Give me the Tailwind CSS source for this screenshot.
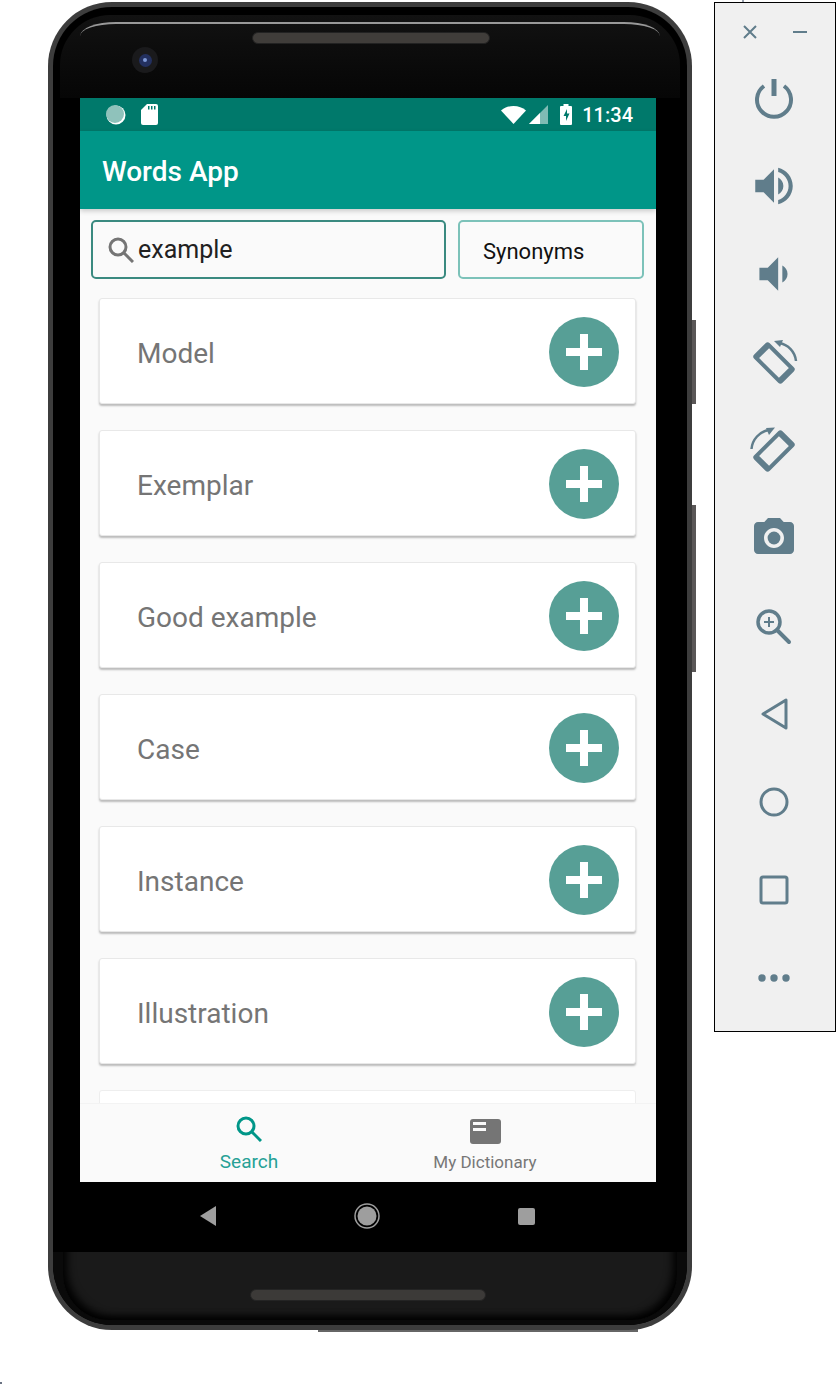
<!DOCTYPE html>
<html lang="en">
<head>
    <meta charset="UTF-8">
    <meta name="viewport" content="width=device-width, initial-scale=1.0">
    <title>Words App</title>
    <script src="https://cdn.jsdelivr.net/npm/@tailwindcss/browser@4"></script>
</head>
<body class="bg-white font-[Roboto,sans-serif]">
    <div class="relative w-[836px] h-[1384px] overflow-hidden flex items-start">
        <!-- Stray marks at the edges of the capture -->
        <div class="absolute left-[742px] top-0 w-[2px] h-[2px] bg-gray-400"></div>
        <div class="absolute left-0 top-[1382px] w-[2px] h-[2px] bg-gray-500"></div>

        <!-- Phone -->
        <div class="relative ml-[48px] mt-[2px] w-[644px] h-[1328px] shrink-0">
            <!-- Side buttons -->
            <div class="absolute left-[644px] top-[318px] w-[4px] h-[84px] bg-[#5a5757]"></div>
            <div class="absolute left-[644px] top-[503px] w-[4px] h-[167px] bg-[#5a5757]"></div>
            <div class="absolute left-[270px] top-[1326px] w-[320px] h-[4px] bg-[#666]"></div>

            <div class="relative h-full rounded-[64px] bg-[#3d3d3d] p-[5px]">
                <div class="relative h-full rounded-[59px] bg-black overflow-hidden flex flex-col">
                    <!-- Top bezel -->
                    <div class="h-[91px] shrink-0 pt-[8px] px-[7px]">
                        <div class="relative h-[83px] rounded-t-[50px] bg-gradient-to-b from-[#121212] to-[#060606] flex justify-center pt-[17px]">
                            <div class="absolute left-[72px] top-[32px] w-[26px] h-[26px] rounded-full bg-[#1a1a1c] flex items-center justify-center">
                                <div class="w-[13px] h-[13px] rounded-full bg-[#23305f] flex items-center justify-center">
                                    <div class="w-[4px] h-[4px] rounded-full bg-[#7f9ad8]"></div>
                                </div>
                            </div>
                            <div class="ml-[2px] w-[238px] h-[12px] rounded-full border border-[#222] bg-[#403d3a]"></div>
                        </div>
                    </div>
                    <!-- Glass highlight -->
                    <div class="absolute left-[27px] top-[15px] w-[580px] h-[14px] rounded-tl-[36px_14px] rounded-tr-[36px_14px] border-t-2 border-[#999]"></div>

                    <!-- Screen -->
                    <div class="ml-[27px] w-[576px] h-[1154px] shrink-0 flex flex-col bg-[#fafafa]">
                        <!-- Status bar -->
                        <div class="h-[33px] shrink-0 bg-[#00796b] flex items-center pl-[26px] pr-[23px]">
                            <svg class="w-[20px] h-[20px]" viewBox="0 0 20 20">
                                <circle cx="10" cy="10" r="9.5" fill="#fff"></circle>
                                <circle cx="9" cy="9" r="9" fill="#8fc2bb"></circle>
                            </svg>
                            <svg class="ml-[15px] w-[17px] h-[21px]" viewBox="0 0 17 21">
                                <path fill="#fff" d="M6 0h9a2 2 0 0 1 2 2v17a2 2 0 0 1-2 2H2a2 2 0 0 1-2-2V6z"></path>
                                <path fill="#00796b" d="M7 2h1.500v3.500H7zM10 2h1.500v3.500H10zM13 2h1.500v3.500H13z"></path>
                            </svg>
                            <svg class="ml-auto w-[25px] h-[18px]" viewBox="0 0 25 18">
                                <path fill="#fff" d="M12.500 18 0 4.500C3.300 1.700 7.700 0 12.500 0S21.700 1.700 25 4.500z"></path>
                            </svg>
                            <svg class="ml-[3px] w-[19px] h-[19px]" viewBox="0 0 19 19">
                                <path fill="#7fbbb4" d="M19 0v19H0z"></path>
                                <path fill="#fff" d="M11 8v11H0z"></path>
                            </svg>
                            <svg class="ml-[12px] w-[12px] h-[21px]" viewBox="0 0 12 21">
                                <path fill="#fff" d="M3.500 0h5v2H11a1 1 0 0 1 1 1v17a1 1 0 0 1-1 1H1a1 1 0 0 1-1-1V3a1 1 0 0 1 1-1h2.500z"></path>
                                <path fill="#00796b" d="M7 5 3.500 12H6v5l3.500-7.500H7z"></path>
                            </svg>
                            <span class="ml-[10px] text-white text-[20px] leading-none font-medium">11:34</span>
                        </div>

                        <!-- App bar -->
                        <div class="relative z-10 h-[78px] shrink-0 bg-[#009688] flex items-center pl-[22px] shadow-[0_2px_5px_rgba(0,0,0,0.2)]">
                            <h1 class="mt-[4px] text-white text-[28px] font-medium">Words App</h1>
                        </div>

                        <!-- Results -->
                        <div class="h-[894px] shrink-0 overflow-hidden pt-[11px]">
                            <div class="flex gap-[12px] pl-[11px]">
                                <div class="w-[355px] h-[59px] rounded-[5px] border-2 border-[#3a8a80] bg-[#fafafa] flex items-center pl-[15px]">
                                    <svg class="w-[26px] h-[26px] shrink-0" fill="none" stroke="#757575" stroke-width="3" viewBox="0 0 26 26">
                                        <circle cx="10" cy="10" r="8"></circle>
                                        <path d="m16 16 9 9"></path>
                                    </svg>
                                    <span class="ml-[4px] text-[25px] text-[#212121]">example</span>
                                </div>
                                <div class="w-[186px] h-[59px] rounded-[5px] border-2 border-[#7cc2b9] bg-[#fafafa] flex items-center pl-[23px]">
                                    <span class="mt-[4px] text-[22px] text-[#111]">Synonyms</span>
                                </div>
                            </div>

                            <div class="mt-[19px] ml-[19px] w-[537px] flex flex-col gap-[26px]">
                                <div class="h-[106px] shrink-0 rounded-[3px] bg-white border border-[#e8e8e8] shadow-[0_2px_2px_rgba(0,0,0,0.25)] flex items-center pl-[37px] pr-[16px]">
                                    <span class="mt-[6px] text-[28px] text-[#757575]">Model</span>
                                    <div class="ml-auto mt-[2px] w-[70px] h-[70px] rounded-full bg-[#579f96] flex items-center justify-center">
                                        <svg class="w-[36px] h-[36px]" viewBox="0 0 36 36"><path fill="#fff" d="M14 0h8v14h14v8H22v14h-8V22H0v-8h14z"></path></svg>
                                    </div>
                                </div>
                                <div class="h-[106px] shrink-0 rounded-[3px] bg-white border border-[#e8e8e8] shadow-[0_2px_2px_rgba(0,0,0,0.25)] flex items-center pl-[37px] pr-[16px]">
                                    <span class="mt-[6px] text-[28px] text-[#757575]">Exemplar</span>
                                    <div class="ml-auto mt-[2px] w-[70px] h-[70px] rounded-full bg-[#579f96] flex items-center justify-center">
                                        <svg class="w-[36px] h-[36px]" viewBox="0 0 36 36"><path fill="#fff" d="M14 0h8v14h14v8H22v14h-8V22H0v-8h14z"></path></svg>
                                    </div>
                                </div>
                                <div class="h-[106px] shrink-0 rounded-[3px] bg-white border border-[#e8e8e8] shadow-[0_2px_2px_rgba(0,0,0,0.25)] flex items-center pl-[37px] pr-[16px]">
                                    <span class="mt-[6px] text-[28px] text-[#757575]">Good example</span>
                                    <div class="ml-auto mt-[2px] w-[70px] h-[70px] rounded-full bg-[#579f96] flex items-center justify-center">
                                        <svg class="w-[36px] h-[36px]" viewBox="0 0 36 36"><path fill="#fff" d="M14 0h8v14h14v8H22v14h-8V22H0v-8h14z"></path></svg>
                                    </div>
                                </div>
                                <div class="h-[106px] shrink-0 rounded-[3px] bg-white border border-[#e8e8e8] shadow-[0_2px_2px_rgba(0,0,0,0.25)] flex items-center pl-[37px] pr-[16px]">
                                    <span class="mt-[6px] text-[28px] text-[#757575]">Case</span>
                                    <div class="ml-auto mt-[2px] w-[70px] h-[70px] rounded-full bg-[#579f96] flex items-center justify-center">
                                        <svg class="w-[36px] h-[36px]" viewBox="0 0 36 36"><path fill="#fff" d="M14 0h8v14h14v8H22v14h-8V22H0v-8h14z"></path></svg>
                                    </div>
                                </div>
                                <div class="h-[106px] shrink-0 rounded-[3px] bg-white border border-[#e8e8e8] shadow-[0_2px_2px_rgba(0,0,0,0.25)] flex items-center pl-[37px] pr-[16px]">
                                    <span class="mt-[6px] text-[28px] text-[#757575]">Instance</span>
                                    <div class="ml-auto mt-[2px] w-[70px] h-[70px] rounded-full bg-[#579f96] flex items-center justify-center">
                                        <svg class="w-[36px] h-[36px]" viewBox="0 0 36 36"><path fill="#fff" d="M14 0h8v14h14v8H22v14h-8V22H0v-8h14z"></path></svg>
                                    </div>
                                </div>
                                <div class="h-[106px] shrink-0 rounded-[3px] bg-white border border-[#e8e8e8] shadow-[0_2px_2px_rgba(0,0,0,0.25)] flex items-center pl-[37px] pr-[16px]">
                                    <span class="mt-[6px] text-[28px] text-[#757575]">Illustration</span>
                                    <div class="ml-auto mt-[2px] w-[70px] h-[70px] rounded-full bg-[#579f96] flex items-center justify-center">
                                        <svg class="w-[36px] h-[36px]" viewBox="0 0 36 36"><path fill="#fff" d="M14 0h8v14h14v8H22v14h-8V22H0v-8h14z"></path></svg>
                                    </div>
                                </div>
                                <div class="h-[106px] shrink-0 rounded-[3px] bg-white border border-[#eeeeee]"></div>
                            </div>
                        </div>

                        <!-- Bottom navigation -->
                        <div class="relative h-[79px] shrink-0 bg-[#fafafa] border-t border-[#f3f3f3] flex justify-center pr-[2px]">
                            <div class="w-[236px] flex flex-col items-center">
                                <svg class="mt-[12px] w-[26px] h-[26px]" fill="none" stroke="#009688" stroke-width="3" viewBox="0 0 26 26">
                                    <circle cx="10" cy="10" r="8"></circle>
                                    <path d="m16 16 9 9"></path>
                                </svg>
                                <span class="mt-[8px] text-[19px] leading-[24px] text-[#26a196]">Search</span>
                            </div>
                            <div class="w-[236px] flex flex-col items-center pt-[15px]">
                                <svg class="w-[31px] h-[25px]" viewBox="0 0 31 25">
                                    <rect width="31" height="25" rx="3" fill="#757575"></rect>
                                    <path fill="#fafafa" d="M3 3h13v3H3zM3 9h13v3H3z"></path>
                                </svg>
                                <span class="mt-[8px] text-[17px] leading-[20px] text-[#777777] whitespace-nowrap">My Dictionary</span>
                            </div>
                        </div>

                        <!-- Android nav -->
                        <div class="relative h-[70px] shrink-0 bg-black flex items-center pb-[2px]">
                            <svg class="ml-[120px] w-[16px] h-[20px]" viewBox="0 0 16 20"><path fill="#9e9e9e" d="M16 0v20L0 10z"></path></svg>
                            <svg class="ml-[138px] w-[26px] h-[26px]" fill="none" viewBox="0 0 26 26">
                                <circle cx="13" cy="13" r="12" stroke="#9e9e9e" stroke-width="1.500"></circle>
                                <circle cx="13" cy="13" r="9.500" fill="#9e9e9e"></circle>
                            </svg>
                            <div class="ml-[138px] w-[17px] h-[17px] rounded-[2px] bg-[#9e9e9e]"></div>
                        </div>
                    </div>

                    <!-- Bottom bezel -->
                    <div class="flex-1 bg-[#0a0a0a] px-[10px] pb-[5px]">
                        <div class="h-full rounded-b-[46px] bg-[#1a1a1a] shadow-[inset_8px_-6px_8px_-4px_#000,inset_-8px_-6px_8px_-4px_#000] flex justify-center pt-[37px]">
                            <div class="ml-[-4px] w-[236px] h-[12px] rounded-full border border-[#242424] bg-[#3c3a38]"></div>
                        </div>
                    </div>
                </div>
            </div>
        </div>

        <!-- Emulator toolbar -->
        <div class="ml-[22px] mt-[2px] w-[122px] h-[1030px] shrink-0 border border-black bg-[#f0f0f0] flex flex-col">
            <div class="h-[51px] shrink-0 flex items-start pt-[21px] pl-[27px]">
                <svg class="w-[16px] h-[16px]" fill="none" stroke="#607d8b" stroke-width="2" viewBox="0 0 16 16"><path d="m2 2 12 12M14 2 2 14"></path></svg>
                <svg class="ml-[34px] w-[16px] h-[16px]" fill="none" stroke="#607d8b" stroke-width="2" viewBox="0 0 16 16"><path d="M1 8h14"></path></svg>
            </div>
            <div class="flex flex-col pr-[2px]">
                <!-- Power -->
                <div class="h-[88px] flex items-center justify-center">
                    <svg class="w-[48px] h-[48px]" fill="none" stroke="#607d8b" stroke-width="4" viewBox="0 0 48 48">
                        <path d="M14 12a17 17 0 1 0 20 0"></path>
                        <path d="M24 5v17" stroke-width="5"></path>
                    </svg>
                </div>
                <!-- Volume up -->
                <div class="h-[88px] flex items-center justify-center">
                    <svg class="w-[50px] h-[50px]" fill="#607d8b" viewBox="0 0 24 24"><path d="M3 9v6h4l5 5V4L7 9H3zm13.500 3c0-1.770-1.020-3.290-2.500-4.030v8.050c1.480-.730 2.500-2.250 2.500-4.020zM14 3.230v2.060c2.890.860 5 3.540 5 6.710s-2.110 5.850-5 6.710v2.060c4.010-.910 7-4.490 7-8.770s-2.990-7.860-7-8.770z"></path></svg>
                </div>
                <!-- Volume down -->
                <div class="h-[88px] flex items-center justify-center">
                    <svg class="w-[50px] h-[50px]" fill="#607d8b" viewBox="0 0 24 24"><path d="M18.500 12c0-1.770-1.020-3.290-2.500-4.030v8.050c1.480-.730 2.500-2.250 2.500-4.020zM5 9v6h4l5 5V4L9 9H5z"></path></svg>
                </div>
                <!-- Rotate right -->
                <div class="h-[88px] flex items-center justify-center">
                    <svg class="w-[48px] h-[48px]" fill="none" viewBox="0 0 48 48">
                        <g transform="rotate(-45 24 25)">
                            <rect x="13" y="5" width="22" height="40" rx="3" fill="#607d8b"></rect>
                            <rect x="17" y="11" width="14" height="28" fill="#f0f0f0"></rect>
                        </g>
                        <path d="M29 5a20 20 0 0 1 17 18" stroke="#607d8b" stroke-width="2.500"></path>
                        <path d="m24 3 9-1-3 7z" fill="#607d8b"></path>
                    </svg>
                </div>
                <!-- Rotate left -->
                <div class="h-[88px] flex items-center justify-center">
                    <svg class="w-[48px] h-[48px]" fill="none" viewBox="0 0 48 48">
                        <g transform="rotate(45 24 25)">
                            <rect x="13" y="5" width="22" height="40" rx="3" fill="#607d8b"></rect>
                            <rect x="17" y="11" width="14" height="28" fill="#f0f0f0"></rect>
                        </g>
                        <path d="M1.500 23A21 21 0 0 1 19 4" stroke="#607d8b" stroke-width="2.500"></path>
                        <path d="m25 1.500-9 0.500 3 7z" fill="#607d8b"></path>
                    </svg>
                </div>
                <!-- Camera -->
                <div class="h-[88px] flex items-center justify-center">
                    <svg class="w-[48px] h-[48px]" fill="#607d8b" viewBox="0 0 24 24">
                        <circle cx="12" cy="12" r="3.200"></circle>
                        <path d="M9 2 7.170 4H4c-1.100 0-2 .9-2 2v12c0 1.100.9 2 2 2h16c1.100 0 2-.9 2-2V6c0-1.100-.9-2-2-2h-3.170L15 2H9zm3 15c-2.760 0-5-2.240-5-5s2.240-5 5-5 5 2.240 5 5-2.240 5-5 5z"></path>
                    </svg>
                </div>
                <!-- Zoom -->
                <div class="h-[88px] flex items-center justify-center">
                    <svg class="w-[48px] h-[48px]" fill="none" stroke="#607d8b" viewBox="0 0 48 48">
                        <circle cx="19" cy="20" r="11" stroke-width="3.500"></circle>
                        <path d="m27 28 12 12" stroke-width="4" stroke-linecap="round"></path>
                        <path d="M19 15v10M14 20h10" stroke-width="2"></path>
                    </svg>
                </div>
                <!-- Back -->
                <div class="h-[88px] flex items-center justify-center">
                    <svg class="w-[48px] h-[48px]" fill="none" stroke="#607d8b" stroke-width="3" stroke-linejoin="round" viewBox="0 0 48 48"><path d="m13 24 23-14v28z"></path></svg>
                </div>
                <!-- Home -->
                <div class="h-[88px] flex items-center justify-center">
                    <svg class="w-[48px] h-[48px]" fill="none" stroke="#607d8b" stroke-width="3" viewBox="0 0 48 48"><circle cx="24" cy="24" r="13"></circle></svg>
                </div>
                <!-- Overview -->
                <div class="h-[88px] flex items-center justify-center">
                    <svg class="w-[48px] h-[48px]" fill="none" stroke="#607d8b" stroke-width="3" viewBox="0 0 48 48"><rect x="11" y="11" width="26" height="26" rx="2"></rect></svg>
                </div>
                <!-- More -->
                <div class="h-[88px] flex items-center justify-center">
                    <svg class="w-[48px] h-[48px]" fill="#607d8b" viewBox="0 0 48 48">
                        <circle cx="12" cy="24" r="3.700"></circle>
                        <circle cx="24" cy="24" r="3.700"></circle>
                        <circle cx="36" cy="24" r="3.700"></circle>
                    </svg>
                </div>
            </div>
        </div>
    </div>
</body>
</html>
